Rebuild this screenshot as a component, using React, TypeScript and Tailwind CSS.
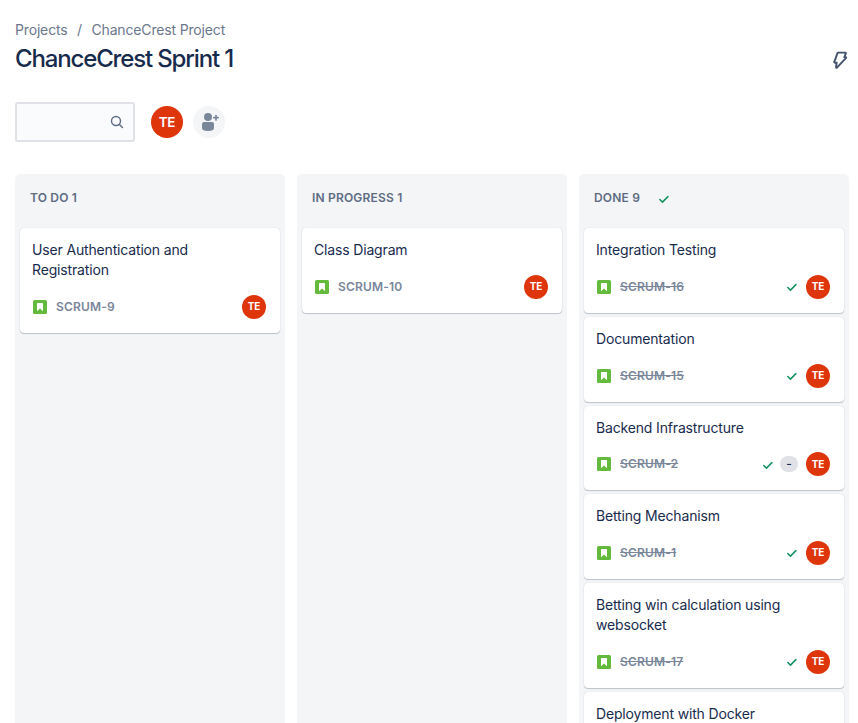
type Issue = { title: string; id?: string; done?: boolean; estimate?: string };
type Column = { name: string; count: number; done?: boolean; issues: Issue[] };

const columns: Column[] = [
  { name: "To do", count: 1, issues: [{ title: "User Authentication and Registration", id: "SCRUM-9" }] },
  { name: "In progress", count: 1, issues: [{ title: "Class Diagram", id: "SCRUM-10" }] },
  {
    name: "Done",
    count: 9,
    done: true,
    issues: [
      { title: "Integration Testing", id: "SCRUM-16", done: true },
      { title: "Documentation", id: "SCRUM-15", done: true },
      { title: "Backend Infrastructure", id: "SCRUM-2", done: true, estimate: "-" },
      { title: "Betting Mechanism", id: "SCRUM-1", done: true },
      { title: "Betting win calculation using websocket", id: "SCRUM-17", done: true },
      { title: "Deployment with Docker" },
    ],
  },
];

function Check() {
  return (
    <svg width="12" height="12" viewBox="0 0 12 12" fill="none" stroke="#14915f" strokeWidth="1.5" strokeLinecap="round" strokeLinejoin="round">
      <path d="M1.8 6.5l2.7 2.6 5.4-5.5" />
    </svg>
  );
}

function StoryIcon() {
  return (
    <svg width="14" height="14" viewBox="0 0 14 14">
      <rect width="14" height="14" rx="1.6" fill="#63ba3c" />
      <path d="M4 3.7a.7.7 0 01.7-.7h4.6a.7.7 0 01.7.7V11.2L7 8.5 4 11.2z" fill="#fff" />
    </svg>
  );
}

function Card({ issue }: { issue: Issue }) {
  return (
    <article className="min-h-[84.7px] rounded-[4px] bg-white pt-3 pr-[14px] pb-[14px] pl-3 shadow-[0_1px_1px_rgba(9,30,66,0.22),0_0_1px_rgba(9,30,66,0.2)]">
      <h3 className="w-[200px] text-[14px] leading-5 tracking-[-0.16px] text-[#172b4d]">{issue.title}</h3>
      {issue.id && (
        <div className="mt-[14.7px] flex h-6 items-center">
          <span className="ml-px">
            <StoryIcon />
          </span>
          <span className={`ml-[9px] text-[12px] leading-4 font-semibold tracking-[0.16px] text-[#7a869a] ${issue.done ? "line-through" : ""}`}>
            {issue.id}
          </span>
          <div className="ml-auto flex items-center">
            {issue.done && (
              <span className={issue.estimate ? "mr-[6px] pt-px" : "mr-[8px] pt-px"}>
                <Check />
              </span>
            )}
            {issue.estimate && (
              <span className="mr-2 flex h-4 w-[18px] items-center justify-center rounded-full bg-[#dfe1e6] text-[12px] leading-4 font-medium text-[#172b4d]">
                {issue.estimate}
              </span>
            )}
            <span className="flex size-6 items-center justify-center rounded-full bg-[#de350b] text-[10px] font-bold tracking-[-0.2px] text-white">TE</span>
          </div>
        </div>
      )}
    </article>
  );
}

export default function App() {
  return (
    <main className="flex h-[723px] w-[858px] flex-col overflow-hidden bg-white pl-[15px] font-[Inter,sans-serif]">
      <nav className="mt-5 flex h-5 items-center text-[14px] leading-5 tracking-[-0.16px] text-[#6b778c]">
        <span>Projects</span>
        <span className="w-6 text-center">/</span>
        <span>ChanceCrest Project</span>
      </nav>
      <header className="mt-[5px] flex h-7 items-center justify-between pr-[10px]">
        <h1 className="text-[24px] leading-7 font-[550] tracking-[-1.15px] text-[#172b4d]">ChanceCrest Sprint 1</h1>
        <svg width="16" height="20" viewBox="0 0 16 20" fill="none" stroke="#42526e" strokeWidth="1.9" strokeLinejoin="round" className="mt-0.5">
          <path d="M6.3 2.6h7a.6.6 0 01.6.8l-1.600 3.700h1.400a.5.5 0 01.4.8L4.900 17.600a.5.5 0 01-.9-.4l.7-4.500H2.800a.6.6 0 01-.5-.9l3.200-8.700a.8.8 0 01.8-.5z" />
        </svg>
      </header>
      <div className="mt-[29px] flex h-10 shrink-0 items-center">
        <div className="flex h-10 w-[120px] items-center justify-end rounded-[3px] border-2 border-[#dfe1e6] bg-[#fafbfc] pr-[9px]">
          <svg width="14" height="14" viewBox="0 0 14 14" fill="none" stroke="#5e6c84" strokeWidth="1.4" strokeLinecap="round">
            <circle cx="6" cy="6" r="4.5" />
            <path d="M9.4 9.4L12.5 12.5" />
          </svg>
        </div>
        <span className="ml-4 flex size-8 items-center justify-center rounded-full bg-[#de350b] text-[13.5px] font-semibold tracking-[-0.3px] text-white">TE</span>
        <span className="ml-[10px] flex size-8 items-center justify-center rounded-full bg-[#f4f5f7]">
          <svg width="20" height="20" viewBox="0 0 20 20" fill="#7a869a">
            <circle cx="9" cy="5" r="4" />
            <path d="M3 12a2 2 0 012-2h8a2 2 0 012 2v4c0 1.7-2 3-6 3s-6-1.3-6-3z" />
            <path d="M17 3.5v4.4M14.8 5.7h4.400" stroke="#7a869a" strokeWidth="1.7" strokeLinecap="round" />
          </svg>
        </span>
      </div>
      <div className="mt-8 flex min-h-0 flex-1 gap-3">
        {columns.map((column) => (
          <section key={column.name} className="w-[270px] shrink-0 rounded-t-[5px] bg-[#f4f5f7] px-[5px]">
            <h2 className="flex h-[54.2px] items-center pb-[6px] pl-[10px] text-[12px] font-semibold tracking-[0.18px] text-[#5e6c84] uppercase">
              {column.name} {column.count}
              {column.done && (
                <span className="ml-[18px] pt-0.5">
                  <Check />
                </span>
              )}
            </h2>
            <div className="flex flex-col gap-1">
              {column.issues.map((issue) => (
                <Card key={issue.title} issue={issue} />
              ))}
            </div>
          </section>
        ))}
      </div>
    </main>
  );
}
